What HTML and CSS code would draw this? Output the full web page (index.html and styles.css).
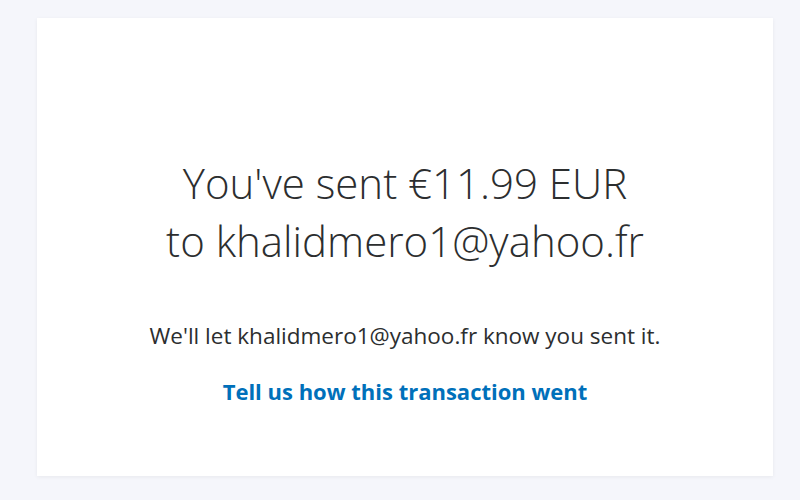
FILE: index.html
```html
<!DOCTYPE html>
<html lang="en">
<head>
    <meta charset="UTF-8">
    <meta name="viewport" content="width=device-width, initial-scale=1.0">
    <title>Payment sent</title>
    <link rel="stylesheet" href="styles.css">
</head>
<body>
    <div class="card">
        <h1 class="title">You've sent €11.99 EUR<br>to khalidmero1@yahoo.fr</h1>
        <p class="note">We'll let khalidmero1@yahoo.fr know you sent it.</p>
        <a class="feedback" href="#">Tell us how this transaction went</a>
    </div>
</body>
</html>
```

FILE: styles.css
```css
body {
    background-color: #f5f6fb;
    color: #2c2e2f;
    font-family: "Open Sans", Arial, sans-serif;
    margin: 0;
    padding: 18px 27px 24px 37px;
}

.card {
    background-color: #fff;
    height: 458px;
    box-sizing: border-box;
    box-shadow: 0 1px 4px rgba(0, 0, 0, 0.06);
    display: flex;
    flex-direction: column;
    align-items: center;
    padding-top: 136px;
    text-align: center;
}

.title {
    font-size: 42px;
    font-weight: 300;
    line-height: 58px;
    margin: 0;
    color: #2c2e2f;
}

.note {
    font-size: 22.5px;
    margin: 52px 0 0;
    line-height: 28px;
}

.feedback {
    margin-top: 26px;
    font-size: 22px;
    font-weight: 700;
    color: #0070ba;
    text-decoration: none;
}
```
